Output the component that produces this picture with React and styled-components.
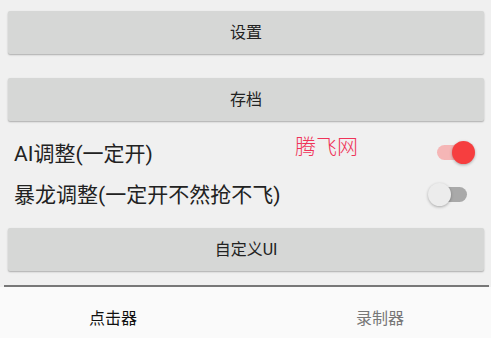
import React, { useState } from 'react';
import styled, { createGlobalStyle } from 'styled-components';

const GlobalStyle = createGlobalStyle`
  html, body {
    margin: 0;
    padding: 0;
    background: #f0f0f0;
  }
  body {
    font-family: Roboto, "Noto Sans CJK SC", "Noto Sans", sans-serif;
  }
`;

const Screen = styled.div`
  position: relative;
  width: 491px;
  height: 338px;
  display: flex;
  flex-direction: column;
  background: #f0f0f0;
  overflow: hidden;
`;

const Content = styled.div`
  flex: 1;
  display: flex;
  flex-direction: column;
  padding: 11px 7px 0 8px;
`;

const ActionButton = styled.button`
  height: 43px;
  margin-bottom: ${(p) => p.$gap || 0}px;
  border: none;
  border-radius: 2px;
  background: #d6d7d6;
  box-shadow: 0 1px 2px rgba(0, 0, 0, 0.22), 0 1px 1px rgba(0, 0, 0, 0.08);
  font-family: Roboto, "Noto Sans CJK SC", sans-serif;
  font-size: 16px;
  color: #222;
  cursor: pointer;
  padding: 0 0 3px;
`;

const SwitchRow = styled.div`
  height: 41px;
  display: flex;
  align-items: center;
  justify-content: space-between;
  padding: 0 14px 3px 6px;
  box-sizing: border-box;
  font-size: 21px;
  color: #222;
`;

const Track = styled.div`
  position: relative;
  width: 33px;
  height: 15px;
  border-radius: 8px;
  background: ${(p) => (p.$on ? '#f5b6b6' : '#a9a9a9')};
  margin-right: ${(p) => (p.$on ? 0 : 3)}px;
  margin-top: ${(p) => (p.$on ? 0 : 2)}px;
`;

const Thumb = styled.div`
  position: absolute;
  top: -4px;
  left: ${(p) => (p.$on ? 15 : -6)}px;
  width: 23px;
  height: 23px;
  border-radius: 50%;
  background: ${(p) => (p.$on ? '#f63e3f' : '#ececec')};
  box-shadow: 0 1px 3px rgba(0, 0, 0, 0.3);
`;

const Watermark = styled.div`
  position: absolute;
  left: 295px;
  top: 130px;
  font-family: "Noto Sans CJK SC", sans-serif;
  font-weight: 300;
  font-size: 21px;
  color: #ef3358;
`;

const Divider = styled.div`
  height: 2px;
  margin: 0 2px 0 4px;
  background: #777;
`;

const BottomNav = styled.nav`
  height: 51px;
  display: flex;
  justify-content: space-between;
  align-items: flex-start;
  padding: 21px 87px 0 89px;
  box-sizing: border-box;
  background: #fafafa;
`;

const Tab = styled.div`
  font-size: 16px;
  line-height: 22px;
  color: ${(p) => (p.$active ? '#111' : '#777')};
`;

const Switch = ({ on, onToggle }) => (
  <Track $on={on} onClick={onToggle}>
    <Thumb $on={on} />
  </Track>
);

const App = () => {
  const [ai, setAi] = useState(true);
  const [dragon, setDragon] = useState(false);

  return (
    <>
      <GlobalStyle />
      <Screen>
        <Content>
          <ActionButton $gap={24}>设置</ActionButton>
          <ActionButton $gap={12}>存档</ActionButton>
          <SwitchRow>
            <span>AI调整(一定开)</span>
            <Switch on={ai} onToggle={() => setAi(!ai)} />
          </SwitchRow>
          <SwitchRow>
            <span>暴龙调整(一定开不然抢不飞)</span>
            <Switch on={dragon} onToggle={() => setDragon(!dragon)} />
          </SwitchRow>
          <ActionButton style={{ marginTop: 13 }}>自定义UI</ActionButton>
        </Content>
        <Divider />
        <BottomNav>
          <Tab $active>点击器</Tab>
          <Tab>录制器</Tab>
        </BottomNav>
        <Watermark>腾飞网</Watermark>
      </Screen>
    </>
  );
};

export default App;
